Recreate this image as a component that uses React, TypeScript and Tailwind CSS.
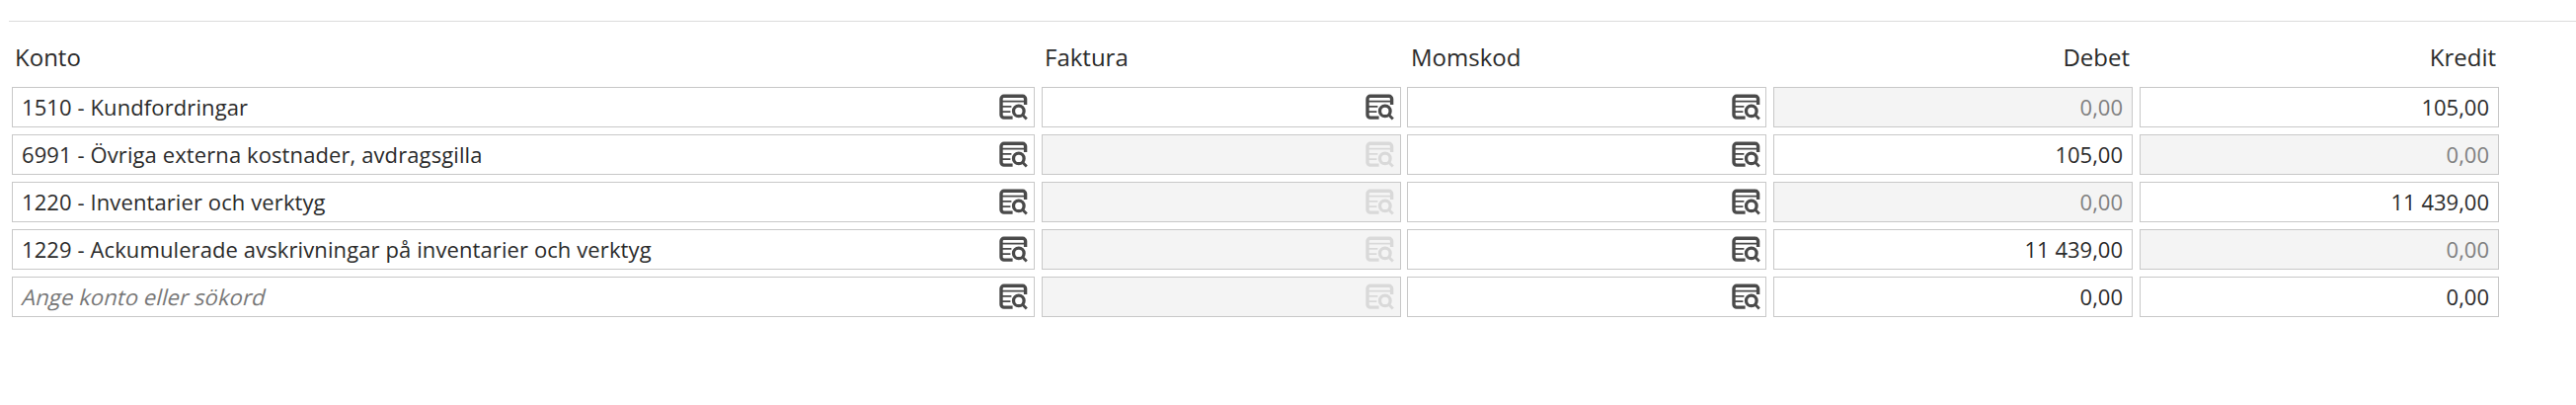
type Line = {
  konto: string;
  fakturaOff: boolean;
  debet: string;
  debetOff: boolean;
  kredit: string;
  kreditOff: boolean;
};

const lines: Line[] = [
  { konto: '1510 - Kundfordringar', fakturaOff: false, debet: '0,00', debetOff: true, kredit: '105,00', kreditOff: false },
  { konto: '6991 - Övriga externa kostnader, avdragsgilla', fakturaOff: true, debet: '105,00', debetOff: false, kredit: '0,00', kreditOff: true },
  { konto: '1220 - Inventarier och verktyg', fakturaOff: true, debet: '0,00', debetOff: true, kredit: '11 439,00', kreditOff: false },
  { konto: '1229 - Ackumulerade avskrivningar på inventarier och verktyg', fakturaOff: true, debet: '11 439,00', debetOff: false, kredit: '0,00', kreditOff: true },
  { konto: '', fakturaOff: true, debet: '0,00', debetOff: false, kredit: '0,00', kreditOff: false },
];

const columns = 'grid grid-cols-[1043px_370px_371px_371px_364px]';

function LookupIcon({ off = false }: { off?: boolean }) {
  return (
    <svg
      viewBox="0 0 29 27"
      className={`h-[27px] w-[29px] shrink-0 ${off ? 'text-[#d9d9d9]' : 'text-[#4a4a4a]'}`}
      fill="none"
      stroke="currentColor"
    >
      <path d="M13.6 24.1H4.8A2.8 2.8 0 0 1 2 21.3V5.1A2.8 2.8 0 0 1 4.8 2.3H23.8A2.8 2.8 0 0 1 26.6 5.1V11" strokeWidth="3.4" />
      <path d="M2 7.6H26.5M2 12.9H12.4M2 18.1H11.4" strokeWidth="1.6" />
      <circle cx="19.8" cy="17.4" r="5.3" strokeWidth="3.3" />
      <path d="M23.6 21.2L27.8 25.4" strokeWidth="2.8" />
    </svg>
  );
}

function Field({ text = '', placeholder = '', off = false, lookup = false, wide = false, tight = false }: { text?: string; placeholder?: string; off?: boolean; lookup?: boolean; wide?: boolean; tight?: boolean }) {
  return (
    <div
      className={`flex h-[41px] items-center border border-[#c8c8c8] pl-[9px] leading-[30px] ${
        wide ? 'w-[1036px]' : 'w-[364px]'
      } ${lookup ? 'justify-between tracking-[0.1px]' : 'justify-end'} ${lookup ? (tight ? 'pr-[5px]' : 'pr-[6px]') : 'pr-[9px]'} ${
        off ? 'bg-[#f4f4f4] text-[#808080]' : 'bg-white text-[#2b2b2b]'
      }`}
    >
      <span className={placeholder ? 'ml-px inline-block skew-x-[-14deg] pb-[2px] text-[#777777]' : 'pb-[2px]'}>{placeholder || text}</span>
      {lookup && <LookupIcon off={off} />}
    </div>
  );
}

export default function App() {
  return (
    <div className="h-[410px] w-[2609px] bg-white pl-[9px] pt-[21px] font-['Open_Sans',sans-serif] text-[22px] text-[#2b2b2b]">
      <div className="border-t border-[#dcdcdc] pl-[3px]">
        <div className={`${columns} pb-[14px] pt-[19px] text-[24px] leading-[33px]`}>
          <div className="pl-[3px]">Konto</div>
          <div className="pl-[3px]">Faktura</div>
          <div className="pl-[4px]">Momskod</div>
          <div className="pr-[10px] text-right">Debet</div>
          <div className="pr-[3px] text-right">Kredit</div>
        </div>
        <div className="flex flex-col gap-[7px]">
          {lines.map((line, i) => (
            <div key={i} className={columns}>
              <Field lookup wide text={line.konto} placeholder={line.konto ? '' : 'Ange konto eller sökord'} />
              <Field lookup off={line.fakturaOff} />
              <Field lookup tight />
              <Field text={line.debet} off={line.debetOff} />
              <Field text={line.kredit} off={line.kreditOff} />
            </div>
          ))}
        </div>
      </div>
    </div>
  );
}
